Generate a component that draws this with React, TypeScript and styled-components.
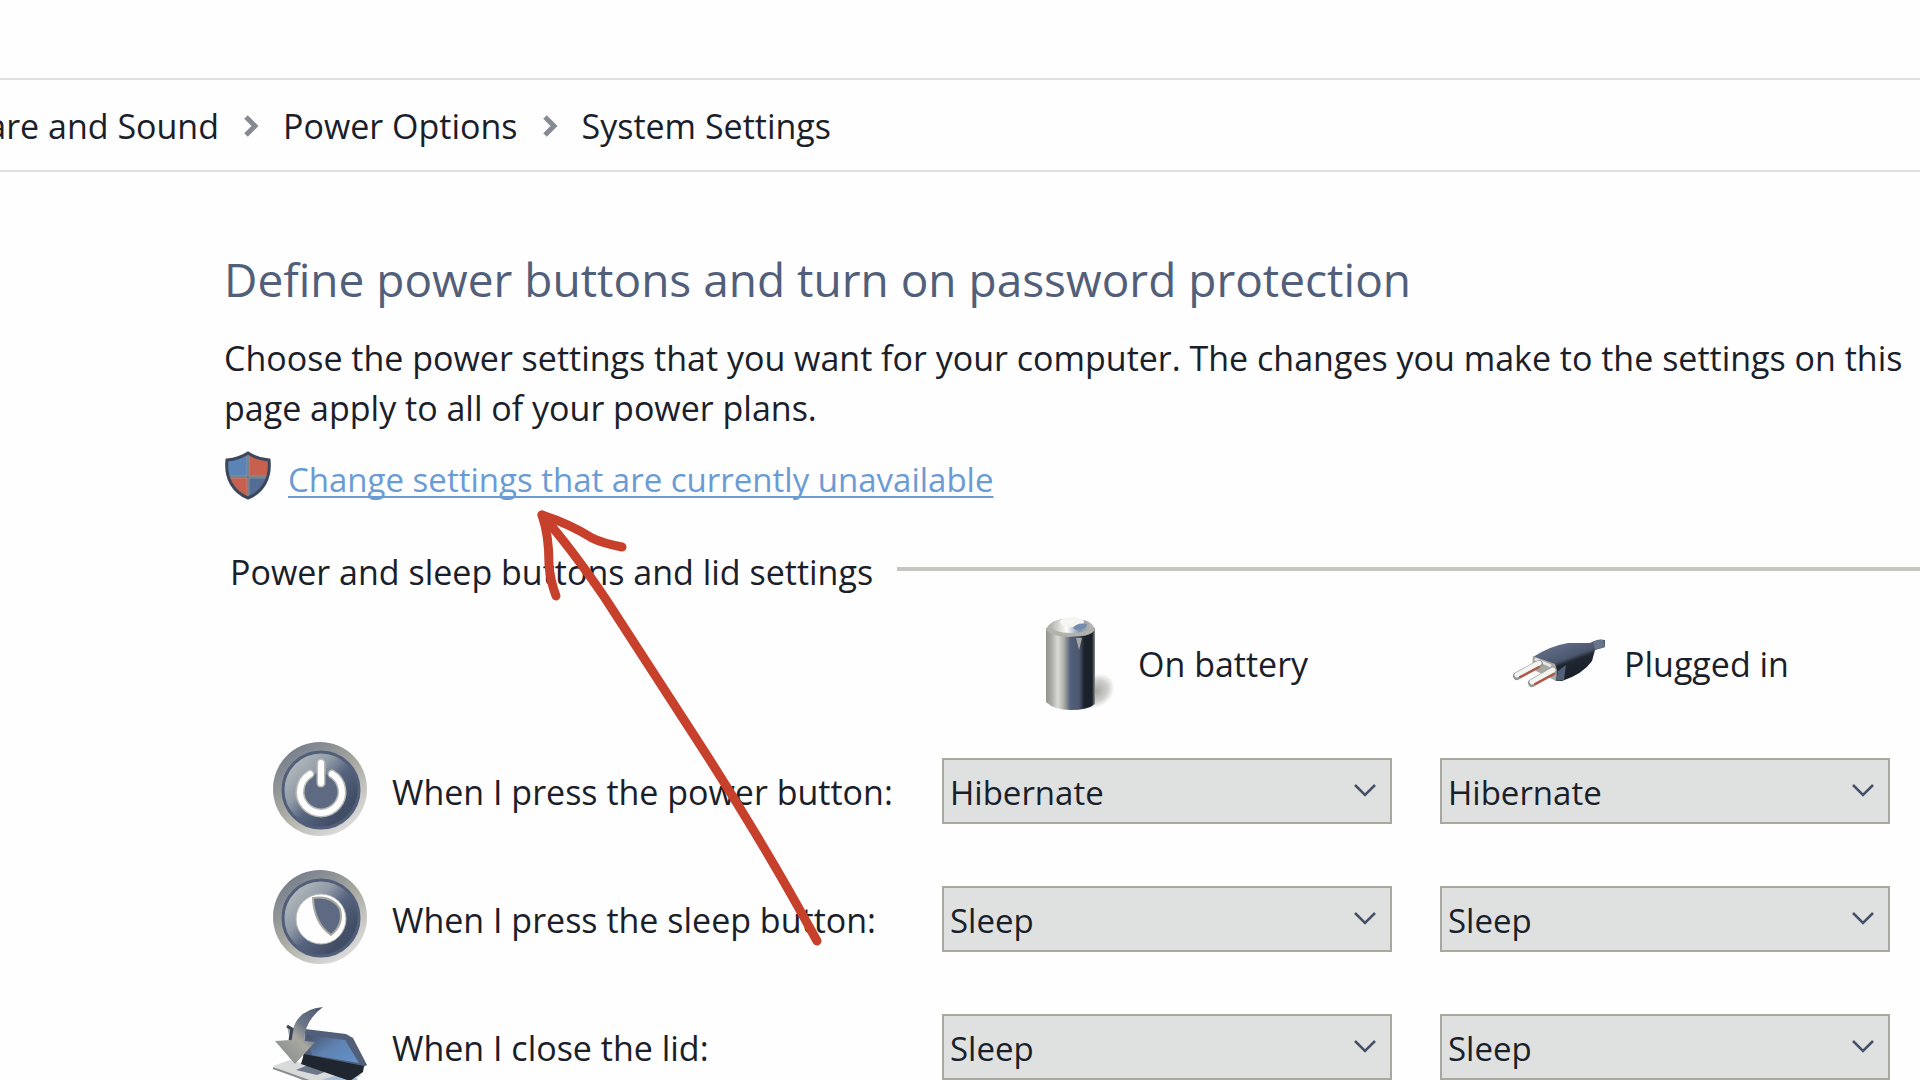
import React from "react";
import styled, { createGlobalStyle } from "styled-components";

const color = {
  ink: "#1a2029",
  slate: "#525f7a",
  blue: "#6a9bd4",
  grey: "#a8a8a0",
  light: "#dfe1e0",
  red: "#c6402c",
};

const GlobalStyle = createGlobalStyle`
  *, *::before, *::after { box-sizing: border-box; }
  body {
    margin: 0;
    background: #fefefe;
    color: ${color.ink};
    font: 400 34px/50px "Open Sans", "Noto Sans", sans-serif;
  }
`;

const Page = styled.div`
  position: relative;
  height: 100vh;
  overflow: hidden;
`;

const TitleStrip = styled.header`
  height: 80px;
  border-bottom: 2px solid ${color.light};
`;

const AddressBar = styled.nav`
  display: flex;
  align-items: center;
  height: 92px;
  padding-top: 2px;
  border-bottom: 2px solid ${color.light};
`;

const Crumb = styled.a`
  color: inherit;
  text-decoration: none;
  white-space: nowrap;
`;

const ClippedCrumb = styled.div`
  display: flex;
  justify-content: flex-end;
  width: 219px;
  overflow: hidden;
`;

const CrumbArrow = styled.svg`
  flex: none;
  width: 16px;
  height: 24px;
  margin: 0 24px;
`;

const Main = styled.main`
  padding: 75px 0 0 224px;
`;

const Title = styled.h1`
  margin: 0 0 22px;
  color: ${color.slate};
  font-size: 46px;
  font-weight: 400;
  line-height: 64px;
`;

const Intro = styled.p`
  margin: 0 0 22px;
`;

const AdminRow = styled.div`
  display: flex;
  align-items: flex-start;
  gap: 16px;
  height: 50px;
  margin-bottom: 42px;
`;

const ShieldIcon = styled.svg`
  flex: none;
  width: 48px;
  height: 50px;
  margin-top: -4px;
`;

const AdminLink = styled.a`
  color: ${color.blue};
  font-size: 33px;
  text-decoration: underline;
  text-decoration-thickness: 2px;
  text-decoration-skip-ink: none;
  text-underline-offset: 4px;
`;

const Group = styled.section`
  padding-left: 6px;
`;

const GroupHeading = styled.div`
  display: flex;
  align-items: center;
  gap: 24px;
`;

const GroupTitle = styled.h2`
  margin: 0;
  font: inherit;
  white-space: nowrap;
`;

const Rule = styled.hr`
  flex: 1;
  height: 4px;
  margin: 0 0 6px;
  border: 0;
  background: #c5c5c1;
`;

const SettingGrid = styled.div`
  display: grid;
  grid-template-columns: minmax(0, 1fr) 450px 450px;
  column-gap: 48px;
  row-gap: 34px;
  align-items: center;
  padding: 19px 30px 0 40px;
`;

const SourceHeading = styled.h3<{ $inset: number }>`
  display: flex;
  align-items: center;
  gap: 16px;
  height: 94px;
  margin: 0;
  padding: 2px 0 0 ${(p) => p.$inset}px;
  font: inherit;
  white-space: nowrap;
`;

const SourceIcon = styled.svg`
  flex: none;
  height: 96px;
`;

const RowLabel = styled.div`
  display: flex;
  align-items: center;
  gap: 22px;
  height: 94px;
  padding-top: 2px;
  white-space: nowrap;
`;

const RowIcon = styled.svg`
  flex: none;
  width: 100px;
  height: 100px;
  margin-bottom: 6px;
`;

const Picker = styled.div`
  display: grid;
  align-items: center;
`;

const Dropdown = styled.select`
  grid-area: 1 / 1;
  width: 100%;
  height: 66px;
  padding: 3px 60px 0 6px;
  appearance: none;
  border: 2px solid ${color.grey};
  border-radius: 0;
  background: ${color.light};
  color: inherit;
  font: inherit;
  font-size: 33px;
`;

const DropdownArrow = styled.svg`
  grid-area: 1 / 1;
  justify-self: end;
  width: 24px;
  height: 14px;
  margin-right: 15px;
  pointer-events: none;
`;

const Annotation = styled.svg`
  position: absolute;
  left: 530px;
  top: 500px;
  width: 300px;
  height: 460px;
  pointer-events: none;
`;

const Separator = () => (
  <CrumbArrow viewBox="0 0 16 24" aria-hidden="true">
    <path d="M3 3 L12 12 L3 21" fill="none" stroke="#868b93" strokeWidth="5" />
  </CrumbArrow>
);

const Shield = () => (
  <ShieldIcon viewBox="0 0 48 50" aria-hidden="true">
    <defs>
      <clipPath id="shieldShape">
        <path d="M24 2 Q33 8 45 9 C47 27 39 41 24 47 C9 41 1 27 3 9 Q15 8 24 2Z" />
      </clipPath>
    </defs>
    <g clipPath="url(#shieldShape)">
      <rect width="24" height="26" fill="#5c83b5" />
      <rect x="24" width="24" height="26" fill="#c7604f" />
      <rect y="26" width="24" height="24" fill="#c7604f" />
      <rect x="24" y="26" width="24" height="24" fill="#546d94" />
      <path d="M24 0V26H48M0 26H24V50" fill="none" stroke="#a8a8a0" strokeWidth="2.5" />
      <path d="M24 0V26H0M24 50V26H48" fill="none" stroke="#525f7a" strokeWidth="1.5" opacity=".7" />
    </g>
    <path
      d="M24 2 Q33 8 45 9 C47 27 39 41 24 47 C9 41 1 27 3 9 Q15 8 24 2Z"
      fill="none"
      stroke="#3c475b"
      strokeWidth="3"
    />
  </ShieldIcon>
);

const Battery = () => (
  <SourceIcon width="76" viewBox="0 0 76 96" aria-hidden="true">
    <defs>
      <linearGradient id="batteryBody">
        <stop offset="0" stopColor="#92938e" />
        <stop offset=".12" stopColor="#adada5" />
        <stop offset=".24" stopColor="#d9dbd9" />
        <stop offset=".36" stopColor="#b0b0a8" />
        <stop offset=".5" stopColor="#525f7a" />
        <stop offset=".68" stopColor="#4b576f" />
        <stop offset=".78" stopColor="#1c222b" />
        <stop offset=".94" stopColor="#1a2029" />
        <stop offset="1" stopColor="#8b8d8b" />
      </linearGradient>
      <linearGradient id="batteryTop">
        <stop offset="0" stopColor="#b0b0a8" />
        <stop offset=".4" stopColor="#fdfdfc" />
        <stop offset=".7" stopColor="#8395ac" />
        <stop offset="1" stopColor="#b9b9b2" />
      </linearGradient>
      <radialGradient id="batteryShadow">
        <stop offset="0" stopColor="#a8a8a0" />
        <stop offset=".6" stopColor="#cdcecb" />
        <stop offset="1" stopColor="#fefefe" />
      </radialGradient>
    </defs>
    <ellipse cx="50" cy="75" rx="20" ry="16" fill="url(#batteryShadow)" transform="rotate(-35 50 75)" />
    <path d="M0 12 V86 Q8 94 25 94 Q42 94 49 88 V12Z" fill="url(#batteryBody)" />
    <path d="M0 14 Q3 3 25 2 Q47 3 49 14 Q44 20 34 20 L22 21 Q5 20 0 14Z" fill="#b1b2ac" />
    <ellipse cx="25" cy="10" rx="21" ry="7" fill="url(#batteryTop)" />
    <ellipse cx="26" cy="6" rx="12" ry="5" fill="#f5f5f3" />
    <path d="M27 12 Q31 6 41 8 Q40 14 30 14Z" fill="#728caf" />
    <path d="M30 22 L33 34 L36 22Z" fill="#a8a8a0" />
  </SourceIcon>
);

const Plug = () => (
  <SourceIcon width="96" viewBox="0 0 96 96" aria-hidden="true">
    <defs>
      <linearGradient id="plugBody" x1=".25" y1=".1" x2=".7" y2=".8">
        <stop offset="0" stopColor="#65718a" />
        <stop offset=".5" stopColor="#4b576e" />
        <stop offset=".62" stopColor="#202731" />
        <stop offset="1" stopColor="#1a2029" />
      </linearGradient>
    </defs>
    <path d="M21 41 Q38 30 56 27 L78 27 Q86 22 93 24 V31 Q86 33 83 34 L80 45 Q71 58 50 65 L44 65 L34 52Z" fill="url(#plugBody)" />
    <path d="M81 26 Q88 23 91 24 L93 31 Q88 33 83 33Z" fill="#68758a" />
    <path d="M21 40 Q19 48 24 55 L44 65 Q46 54 43 48Z" fill="#a8a8a0" />
    <path d="M44 65 L46 55 L54 49 L52 64Z" fill="#525f7a" />
    <path d="M23 43 L39 50" stroke="#e8e9e7" strokeWidth="3" />
    <g strokeLinecap="round">
      <path d="M5 60 L27 48 M20 67 L41 55" stroke="#929791" strokeWidth="8" />
      <path d="M5 59 L27 47 M20 66 L41 54" stroke="#f3f3f1" strokeWidth="5" />
      <path d="M8 61 L27 51 M23 68 L42 58" stroke="#b35444" strokeWidth="2" />
    </g>
  </SourceIcon>
);

const RoundBase = ({ id }: { id: string }) => (
  <>
    <defs>
      <linearGradient id={`${id}Rim`} x1=".1" y1="0" x2=".8" y2="1">
        <stop offset="0" stopColor="#6c7688" />
        <stop offset=".5" stopColor="#a8a8a0" />
        <stop offset="1" stopColor="#e2e3e2" />
      </linearGradient>
      <linearGradient id={`${id}Face`} x1=".05" y1=".15" x2=".75" y2=".8">
        <stop offset="0" stopColor="#b9bebf" />
        <stop offset=".4" stopColor="#8f9aa7" />
        <stop offset=".65" stopColor="#56647f" />
        <stop offset="1" stopColor="#424e65" />
      </linearGradient>
    </defs>
    <circle cx="50" cy="50" r="47" fill={`url(#${id}Rim)`} />
    <circle cx="51" cy="51" r="38" fill={`url(#${id}Face)`} stroke="#525f7a" strokeWidth="3" />
  </>
);

const PowerIcon = () => (
  <RowIcon viewBox="0 0 100 100" aria-hidden="true">
    <RoundBase id="power" />
    <circle cx="50" cy="52" r="18" fill="#5d6a82" />
    <g fill="none" stroke="#b8bab5" strokeLinecap="round" strokeWidth="9">
      <path d="M40 35 A21 21 0 1 0 62 35" />
      <path d="M51 24 V44" />
    </g>
    <g fill="none" stroke="#fefefe" strokeLinecap="round" strokeWidth="6">
      <path d="M40 35 A21 21 0 1 0 62 35" />
      <path d="M51 24 V44" />
    </g>
  </RowIcon>
);

const SleepIcon = () => (
  <RowIcon viewBox="0 0 100 100" aria-hidden="true">
    <RoundBase id="sleep" />
    <circle cx="51" cy="52" r="25" fill="#fefefe" stroke="#b8bab5" strokeWidth="1" />
    <path d="M43 31 Q62 28 70 42 Q74 58 61 68 Q44 56 43 31Z" fill="#5d6a82" stroke="#a8a8a0" strokeWidth="2" />
  </RowIcon>
);

const LidIcon = () => (
  <RowIcon viewBox="0 0 100 100" aria-hidden="true">
    <defs>
      <linearGradient id="lidScreen" x1="0" y1="0" x2="1" y2=".8">
        <stop offset="0" stopColor="#465168" />
        <stop offset=".5" stopColor="#5e82b2" />
        <stop offset="1" stopColor="#6390c6" />
      </linearGradient>
      <linearGradient id="lidArrow" x1="1" y1="0" x2=".2" y2="1">
        <stop offset="0" stopColor="#4b576f" />
        <stop offset=".4" stopColor="#6d7788" />
        <stop offset=".6" stopColor="#a8a8a0" />
        <stop offset="1" stopColor="#888d8d" />
      </linearGradient>
    </defs>
    <path d="M3 71 L20 65 L65 77 L92 80 L72 92 L42 90Z" fill="#d9dbda" />
    <path d="M3 73 L42 87" stroke="#898e91" strokeWidth="2" />
    <path d="M26 75 L38 70 L60 75 L47 80Z" fill="#6c7789" />
    <path d="M48 86 L74 78 L88 84 L74 95Z" fill="#a9bfd6" />
    <path d="M35 34 L76 39 L83 43 L97 70 L86 76 L33 66Z" fill="#525f7a" />
    <path d="M37 40 L75 45 L89 68 L42 60Z" fill="url(#lidScreen)" />
    <path d="M34 59 L94 71 L93 77 L80 86 L31 69Z" fill="#1f2630" />
    <path d="M53 12 Q29 14 23 34 L17 31 L20 45 L5 46 L25 69 L45 47 L34 46 Q35 25 53 12Z" fill="url(#lidArrow)" />
    <path d="M17 31 L22 34 L20 45" fill="none" stroke="#394459" strokeWidth="3" />
  </RowIcon>
);

const settings = [
  { id: "power", label: "When I press the power button:", value: "Hibernate", Icon: PowerIcon },
  { id: "sleep", label: "When I press the sleep button:", value: "Sleep", Icon: SleepIcon },
  { id: "lid", label: "When I close the lid:", value: "Sleep", Icon: LidIcon },
];

const actions = ["Do nothing", "Sleep", "Hibernate", "Shut down"];

const ActionPicker = ({ id, value, label }: { id: string; value: string; label?: string }) => (
  <Picker>
    <Dropdown id={id} defaultValue={value} aria-label={label}>
      {actions.map((action) => (
        <option key={action}>{action}</option>
      ))}
    </Dropdown>
    <DropdownArrow viewBox="0 0 24 14" aria-hidden="true">
      <path d="M2 1 L12 11 L22 1" fill="none" stroke="#465168" strokeWidth="2.5" />
    </DropdownArrow>
  </Picker>
);

export default function App() {
  return (
    <Page>
      <GlobalStyle />
      <TitleStrip />
      <AddressBar aria-label="Breadcrumb">
        <ClippedCrumb>
          <Crumb href="#hardware">Hardware and Sound</Crumb>
        </ClippedCrumb>
        <Separator />
        <Crumb href="#power">Power Options</Crumb>
        <Separator />
        <Crumb href="#system">System Settings</Crumb>
      </AddressBar>
      <Main>
        <Title>Define power buttons and turn on password protection</Title>
        <Intro>
          Choose the power settings that you want for your computer. The changes you make to the
          settings on this page apply to all of your power plans.
        </Intro>
        <AdminRow>
          <Shield />
          <AdminLink href="#unlock">Change settings that are currently unavailable</AdminLink>
        </AdminRow>
        <Group>
          <GroupHeading>
            <GroupTitle>Power and sleep buttons and lid settings</GroupTitle>
            <Rule />
          </GroupHeading>
          <SettingGrid>
            <span />
            <SourceHeading $inset={104}>
              <Battery />
              On battery
            </SourceHeading>
            <SourceHeading $inset={72}>
              <Plug />
              Plugged in
            </SourceHeading>
            {settings.map(({ id, label, value, Icon }) => (
              <React.Fragment key={id}>
                <RowLabel>
                  <Icon />
                  <label htmlFor={`${id}-battery`}>{label}</label>
                </RowLabel>
                <ActionPicker id={`${id}-battery`} value={value} />
                <ActionPicker id={`${id}-plugged`} value={value} label={`${label} Plugged in`} />
              </React.Fragment>
            ))}
          </SettingGrid>
        </Group>
      </Main>
      <Annotation viewBox="530 500 300 460" aria-hidden="true">
        <g fill="none" stroke={color.red} strokeWidth="9" strokeLinecap="round" strokeLinejoin="round">
          <path d="M542 515 Q571 548 605 598 L697 740 Q765 845 817 941" />
          <path d="M622 547 Q602 543 592 538 Q570 524 542 515 Q549 535 549 564 Q550 580 556 596" />
        </g>
      </Annotation>
    </Page>
  );
}
